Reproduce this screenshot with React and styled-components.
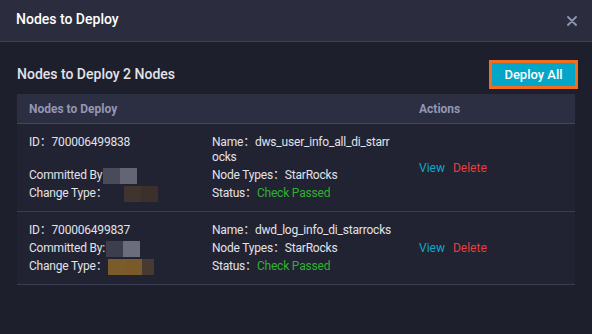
import React from "react";
import styled, { createGlobalStyle } from "styled-components";

const GlobalStyle = createGlobalStyle`
  html, body {
    margin: 0;
    padding: 0;
    background: #1e1f2c;
  }
  * { box-sizing: border-box; }
`;

const nodes = [
  {
    id: "700006499838",
    name: "dws_user_info_all_di_starrocks",
    committedLabel: "Committed By",
    committed: ["#4a4b5a", "#646574"],
    committedGap: 1,
    change: ["#3f342e", "#3b302b"],
    changeGap: 16,
  },
  {
    id: "700006499837",
    name: "dwd_log_info_di_starrocks",
    committedLabel: "Committed By:",
    committed: ["#3d3e4d", "#6b6c7c"],
    committedGap: 1,
    change: ["#7a5b2c", "#7b5a2a", "#473b31"],
    changeGap: 0,
  },
];

const App = () => {
  return (
    <Modal>
      <GlobalStyle />
      <Header>
        <Title>Nodes to Deploy</Title>
        <Close aria-label="close">
          <svg width="10" height="10" viewBox="0 0 10 10">
            <path d="M1 1L9 9M9 1L1 9" stroke="#8d95b3" strokeWidth="1.8" strokeLinecap="round" />
          </svg>
        </Close>
      </Header>
      <Body>
        <Toolbar>
          <Heading>Nodes to Deploy 2 Nodes</Heading>
          <DeployButton>Deploy All</DeployButton>
        </Toolbar>
        <Table>
          <HeadRow>
            <HeadCell>Nodes to Deploy</HeadCell>
            <HeadCell>Actions</HeadCell>
          </HeadRow>
          {nodes.map((n) => (
            <Row key={n.id}>
              <Info>
                <Field>ID：{n.id}</Field>
                <Field>Name：{n.name}</Field>
                <Field>
                  {n.committedLabel}
                  <Blur colors={n.committed} gap={n.committedGap} />
                </Field>
                <Field>Node Types：StarRocks</Field>
                <Field>
                  Change Type：
                  <Blur colors={n.change} gap={n.changeGap} />
                </Field>
                <Field>
                  Status：<Passed>Check Passed</Passed>
                </Field>
              </Info>
              <Actions>
                <ActionLink $tone="#10a9c7">View</ActionLink>
                <ActionLink $tone="#e2403e">Delete</ActionLink>
              </Actions>
            </Row>
          ))}
        </Table>
      </Body>
    </Modal>
  );
};

// pixelated (masked) values as in the screenshot
const Blur = ({ colors, gap = 0 }) => (
  <BlurWrap style={{ marginLeft: gap }}>
    {colors.map((c, i) => (
      <Pixel key={i} $color={c} $narrow={i === 2} />
    ))}
  </BlurWrap>
);

export default App;

const Modal = styled.div`
  width: 592px;
  height: 334px;
  background: #1e1f2c;
  font-family: Roboto, "Noto Sans CJK SC", "Liberation Sans", sans-serif;
  color: #e4e5ea;
  overflow: hidden;
`;

const Header = styled.div`
  height: 42px;
  padding: 0 16px;
  display: flex;
  align-items: center;
  justify-content: space-between;
  background: #2b2d3e;
  border-bottom: 1px solid #3c3f52;
`;

const Title = styled.div`
  font-size: 14px;
  font-weight: 500;
  color: #ffffff;
  margin-top: -3px;
`;

const Close = styled.div`
  width: 10px;
  height: 10px;
  margin-right: -1px;
  margin-top: 1px;
  display: flex;
`;

const Body = styled.div`
  padding: 17px 17px 0 17px;
`;

const Toolbar = styled.div`
  display: flex;
  align-items: center;
  justify-content: space-between;
  height: 30px;
  margin-bottom: 5px;
`;

const Heading = styled.div`
  font-size: 14px;
  font-weight: 500;
  color: #e2e3e8;
`;

const DeployButton = styled.button`
  height: 23px;
  width: 83px;
  border: none;
  outline: 3px solid #f26d1d;
  background: #03a6c6;
  color: #ffffff;
  font-family: Roboto, "Liberation Sans", sans-serif;
  font-size: 13px;
  font-weight: 500;
  padding: 0;
  cursor: pointer;
`;

const Table = styled.div`
  width: 558px;
  background: #212232;
`;

const HeadRow = styled.div`
  display: grid;
  grid-template-columns: 390px 1fr;
  height: 30px;
  align-items: center;
  background: #2c2e42;
  border-bottom: 1px solid #45475c;
`;

const HeadCell = styled.div`
  padding: 0 12px;
  font-size: 12px;
  font-weight: 700;
  color: #9496b3;
`;

const Row = styled.div`
  display: grid;
  grid-template-columns: 390px 1fr;
  align-items: center;
  border-bottom: 1px solid #3b3d50;
`;

const Info = styled.div`
  display: grid;
  grid-template-columns: 183px 183px;
  row-gap: 3px;
  padding: 11px 12px 10px 12px;
  align-items: start;
`;

const Field = styled.div`
  font-size: 12px;
  line-height: 15px;
  letter-spacing: -0.2px;
  color: #e2e3e8;
  word-break: break-all;
  padding-right: 1px;
`;

const Passed = styled.span`
  color: #2fb22f;
`;

const Actions = styled.div`
  padding: 0 12px;
  display: flex;
  gap: 8px;
`;

const ActionLink = styled.span`
  font-size: 12px;
  color: ${(p) => p.$tone};
  cursor: pointer;
`;

const BlurWrap = styled.span`
  display: inline-flex;
  vertical-align: middle;
  margin-top: -2px;
  margin-bottom: -2px;
`;

const Pixel = styled.span`
  display: inline-block;
  width: ${(p) => (p.$narrow ? "12px" : "17px")};
  height: 16px;
  background: ${(p) => p.$color};
`;
